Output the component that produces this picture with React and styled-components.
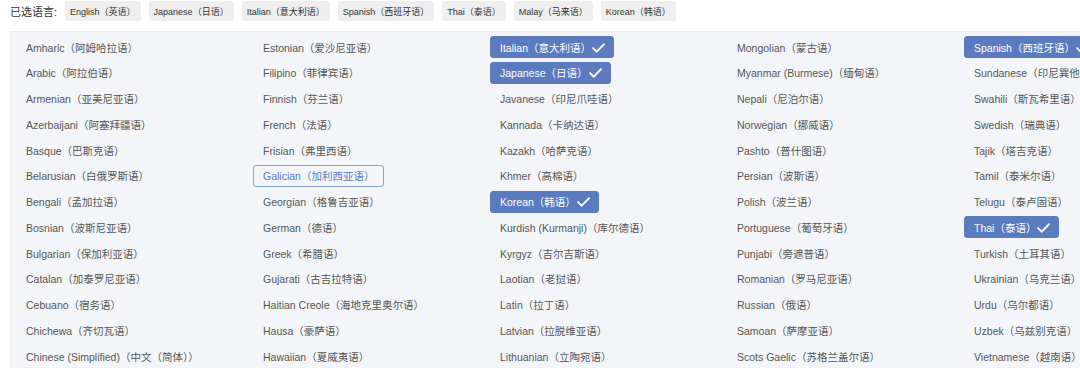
import React from 'react';
import styled, { createGlobalStyle } from 'styled-components';

const GlobalStyle = createGlobalStyle`
  html, body {
    margin: 0;
    padding: 0;
    background: #ffffff;
    overflow: hidden;
  }
  body {
    font-family: "Liberation Sans", Arial, "Noto Sans CJK SC", sans-serif;
  }
`;

const selected = ['English（英语）', 'Japanese（日语）', 'Italian（意大利语）', 'Spanish（西班牙语）', 'Thai（泰语）', 'Malay（马来语）', 'Korean（韩语）'];

const columns = [
  ['Amharic（阿姆哈拉语）', 'Arabic（阿拉伯语）', 'Armenian（亚美尼亚语）', 'Azerbaijani（阿塞拜疆语）', 'Basque（巴斯克语）', 'Belarusian（白俄罗斯语）', 'Bengali（孟加拉语）', 'Bosnian（波斯尼亚语）', 'Bulgarian（保加利亚语）', 'Catalan（加泰罗尼亚语）', 'Cebuano（宿务语）', 'Chichewa（齐切瓦语）', 'Chinese (Simplified)（中文（简体））'],
  ['Estonian（爱沙尼亚语）', 'Filipino（菲律宾语）', 'Finnish（芬兰语）', 'French（法语）', 'Frisian（弗里西语）', 'Galician（加利西亚语）', 'Georgian（格鲁吉亚语）', 'German（德语）', 'Greek（希腊语）', 'Gujarati（古吉拉特语）', 'Haitian Creole（海地克里奥尔语）', 'Hausa（豪萨语）', 'Hawaiian（夏威夷语）'],
  ['Italian（意大利语）', 'Japanese（日语）', 'Javanese（印尼爪哇语）', 'Kannada（卡纳达语）', 'Kazakh（哈萨克语）', 'Khmer（高棉语）', 'Korean（韩语）', 'Kurdish (Kurmanji)（库尔德语）', 'Kyrgyz（吉尔吉斯语）', 'Laotian（老挝语）', 'Latin（拉丁语）', 'Latvian（拉脱维亚语）', 'Lithuanian（立陶宛语）'],
  ['Mongolian（蒙古语）', 'Myanmar (Burmese)（缅甸语）', 'Nepali（尼泊尔语）', 'Norwegian（挪威语）', 'Pashto（普什图语）', 'Persian（波斯语）', 'Polish（波兰语）', 'Portuguese（葡萄牙语）', 'Punjabi（旁遮普语）', 'Romanian（罗马尼亚语）', 'Russian（俄语）', 'Samoan（萨摩亚语）', 'Scots Gaelic（苏格兰盖尔语）'],
  ['Spanish（西班牙语）', 'Sundanese（印尼巽他语）', 'Swahili（斯瓦希里语）', 'Swedish（瑞典语）', 'Tajik（塔吉克语）', 'Tamil（泰米尔语）', 'Telugu（泰卢固语）', 'Thai（泰语）', 'Turkish（土耳其语）', 'Ukrainian（乌克兰语）', 'Urdu（乌尔都语）', 'Uzbek（乌兹别克语）', 'Vietnamese（越南语）'],
];

// ticked in the list (English and Malay sit further down, out of view)
const ticked = ['Italian（意大利语）', 'Japanese（日语）', 'Korean（韩语）', 'Spanish（西班牙语）', 'Thai（泰语）'];
const hovered = 'Galician（加利西亚语）';

const Check = () => (
  <svg width="15" height="15" viewBox="0 0 16 16" fill="none">
    <path d="M2.2 8.6l3.9 3.9L14 4.4" stroke="#fff" strokeWidth="2" strokeLinecap="round" strokeLinejoin="round" />
  </svg>
);

const App = () => {
  const items = columns.flat();
  return (
    <>
      <GlobalStyle />
      <Page>
        <Header>
          <Label>已选语言:</Label>
          {selected.map((s) => (
            <Chip key={s}>{s}</Chip>
          ))}
        </Header>
        <Panel>
          <Grid>
            {items.map((name) => {
              const on = ticked.includes(name);
              return (
                <Item key={name} $active={on} $hover={name === hovered}>
                  {name}
                  {on && <Check />}
                </Item>
              );
            })}
          </Grid>
        </Panel>
      </Page>
    </>
  );
};

const Page = styled.div`
  width: 1080px;
  height: 368px;
  overflow: hidden;
`;

const Header = styled.div`
  display: flex;
  align-items: center;
  height: 22px;
  padding-left: 10px;
`;

const Label = styled.span`
  font-size: 11px;
  color: #333;
  margin-right: 8px;
`;

const Chip = styled.span`
  display: inline-flex;
  align-items: center;
  height: 20px;
  padding: 0 5px;
  margin-right: 8px;
  background: #eeeeee;
  border-radius: 3px;
  font-size: 9px;
  color: #333;
`;

const Panel = styled.div`
  margin: 9px 0 0 10px;
  background: #f3f5f9;
  border-left: 1px solid #e9ecf1;
  border-top: 1px solid #e9ecf1;
  height: 400px;
  padding: 4px 0 0 5px;
`;

const Grid = styled.div`
  display: grid;
  grid-template-columns: repeat(5, 237px);
  grid-template-rows: repeat(13, 22px);
  grid-auto-flow: column;
  row-gap: 3.75px;
`;

const Item = styled.div`
  justify-self: start;
  display: inline-flex;
  align-items: center;
  height: 22px;
  box-sizing: border-box;
  padding: 0 ${(p) => (p.$active ? '7px' : '9px')} 0 9px;
  border-radius: 3px;
  font-size: 10.5px;
  white-space: nowrap;
  color: ${(p) => (p.$active ? '#ffffff' : p.$hover ? '#5b7bbf' : '#555555')};
  background: ${(p) => (p.$active ? '#5b7bbf' : 'transparent')};
  border: 1px solid ${(p) => (p.$active ? '#5b7bbf' : p.$hover ? '#8ba4d6' : 'transparent')};
`;

export default App;
